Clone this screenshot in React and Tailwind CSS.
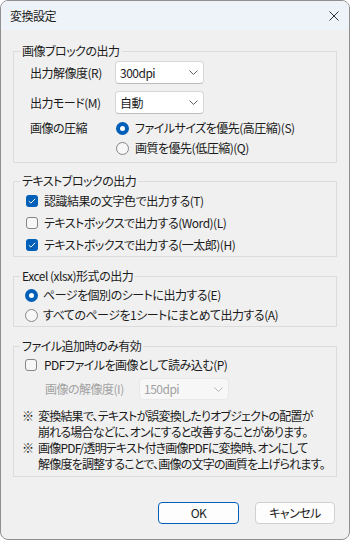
import React from 'react'

const font = "[font-family:'Noto_Sans_CJK_JP','Noto_Sans_CJK_SC',sans-serif] [font-feature-settings:'palt']"

function Chevron({ color = '#5f5f5f' }) {
  return (
    <svg width="9" height="5" viewBox="0 0 9 5" className="shrink-0">
      <path d="M0.5 0.5 L4.5 4.5 L8.5 0.5" fill="none" stroke={color} strokeWidth="1" />
    </svg>
  )
}

function Combo({ value, disabled, className = '' }) {
  return (
    <div
      className={
        'flex items-center justify-between rounded-[4px] border pl-[4px] pr-[5px] ' +
        (disabled
          ? 'border-[#e8e8e8] bg-[#f7f7f7] text-[#a2a2a2] '
          : 'border-[#d6d6d6] border-b-[#bcbcbc] bg-white text-[#1b1b1b] ') +
        className
      }
    >
      <span>{value}</span>
      <Chevron color={disabled ? '#b5b5b5' : '#606060'} />
    </div>
  )
}

function Radio({ checked }) {
  if (checked) {
    return (
      <span className="flex h-[13px] w-[13px] shrink-0 items-center justify-center rounded-full bg-[#005fb8]">
        <span className="h-[5px] w-[5px] rounded-full bg-white" />
      </span>
    )
  }
  return <span className="h-[13px] w-[13px] shrink-0 rounded-full border border-[#858585] bg-[#f7f7f7]" />
}

function Check({ checked }) {
  if (checked) {
    return (
      <span className="flex h-[12px] w-[12px] shrink-0 items-center justify-center rounded-[3px] bg-[#005fb8]">
        <svg width="8" height="6" viewBox="0 0 8 6">
          <path d="M0.8 3.2 L2.9 5.1 L7.2 0.8" fill="none" stroke="white" strokeWidth="1" />
        </svg>
      </span>
    )
  }
  return <span className="h-[12px] w-[12px] shrink-0 rounded-[3px] border border-[#858585] bg-[#f7f7f7]" />
}

function Group({ title, className = '', children }) {
  return (
    <fieldset className={'border border-[#dcdcdc] ' + className}>
      <legend className="ml-[6px] px-[2px] text-[12px] leading-[18px]">{title}</legend>
      {children}
    </fieldset>
  )
}

export default function App() {
  return (
    <div className={'flex h-[540px] w-[350px] flex-col overflow-hidden whitespace-nowrap rounded-[8px] border border-[#8f8f8f] bg-[#f0f0f0] text-[12px] tracking-[-0.5px] text-[#1b1b1b] ' + font}>
      <div className="flex h-[29px] shrink-0 items-center justify-between bg-[#eef3f9] pl-[9px] pr-[10px]">
        <span className="pt-[1px]">変換設定</span>
        <svg width="10" height="10" viewBox="0 0 10 10">
          <path d="M0.5 0.5 L9.5 9.5 M9.5 0.5 L0.5 9.5" stroke="#333" strokeWidth="1" />
        </svg>
      </div>

      <div className="flex flex-1 flex-col px-[12px] pt-[12px]">
        <Group title="画像ブロックの出力">
          <div className="flex flex-col pl-[16px] pb-[4px] pt-[1px]">
            <div className="flex items-center">
              <span className="w-[85px]">出力解像度(R)</span>
              <Combo value="300dpi" className="h-[23px] w-[89px]" />
            </div>
            <div className="mt-[7px] flex items-center">
              <span className="w-[85px]">出力モード(M)</span>
              <Combo value="自動" className="h-[23px] w-[89px]" />
            </div>
            <div className="mt-[4px] flex h-[20px] items-center">
              <span className="w-[86px]">画像の圧縮</span>
              <Radio checked />
              <span className="ml-[6px]">ファイルサイズを優先(高圧縮)(S)</span>
            </div>
            <div className="flex h-[20px] items-center pl-[86px]">
              <Radio />
              <span className="ml-[6px]">画質を優先(低圧縮)(Q)</span>
            </div>
          </div>
        </Group>

        <Group title="テキストブロックの出力" className="mt-[9px]">
          <div className="flex flex-col pl-[12px]">
            <div className="flex h-[22px] items-center">
              <Check checked />
              <span className="ml-[6px]">認識結果の文字色で出力する(T)</span>
            </div>
            <div className="flex h-[22px] items-center">
              <Check />
              <span className="ml-[6px]">テキストボックスで出力する(Word)(L)</span>
            </div>
            <div className="flex h-[22px] items-center">
              <Check checked />
              <span className="ml-[6px]">テキストボックスで出力する(一太郎)(H)</span>
            </div>
          </div>
        </Group>

        <Group title="Excel (xlsx)形式の出力" className="mt-[10px]">
          <div className="flex flex-col pb-[1px] pl-[11px]">
            <div className="flex h-[20px] items-center">
              <Radio checked />
              <span className="ml-[5px]">ページを個別のシートに出力する(E)</span>
            </div>
            <div className="flex h-[20px] items-center">
              <Radio />
              <span className="ml-[5px]">すべてのページを1シートにまとめて出力する(A)</span>
            </div>
          </div>
        </Group>

        <Group title="ファイル追加時のみ有効" className="mt-[10px]">
          <div className="flex flex-col pb-[4px] pl-[11px]">
            <div className="flex h-[20px] items-center">
              <Check />
              <span className="ml-[7px]">PDFファイルを画像として読み込む(P)</span>
            </div>
            <div className="mt-[3px] flex items-center pl-[20px]">
              <span className="w-[94px] text-[#a2a2a2]">画像の解像度(I)</span>
              <Combo value="150dpi" disabled className="h-[22px] w-[90px]" />
            </div>
            <div className="-ml-[3px] mt-[8px] flex flex-col leading-[16px] tracking-[-0.8px]">
              <div className="flex">
                <span className="w-[16px] shrink-0">※</span>
                <span>変換結果で、テキストが誤変換したりオブジェクトの配置が<br />崩れる場合などに、オンにすると改善することがあります。</span>
              </div>
              <div className="flex">
                <span className="w-[16px] shrink-0">※</span>
                <span>画像PDF/透明テキスト付き画像PDFに変換時、オンにして<br />解像度を調整することで、画像の文字の画質を上げられます。</span>
              </div>
            </div>
          </div>
        </Group>

        <div className="mr-[2px] mt-[25px] flex justify-end gap-[16px]">
          <button className="h-[22px] w-[81px] rounded-[4px] border border-[#005fb8] bg-[#fdfdfd] text-[12px]">OK</button>
          <button className="h-[22px] w-[80px] rounded-[4px] border border-[#d0d0d0] bg-[#fdfdfd] text-[12px]">キャンセル</button>
        </div>
      </div>
    </div>
  )
}
